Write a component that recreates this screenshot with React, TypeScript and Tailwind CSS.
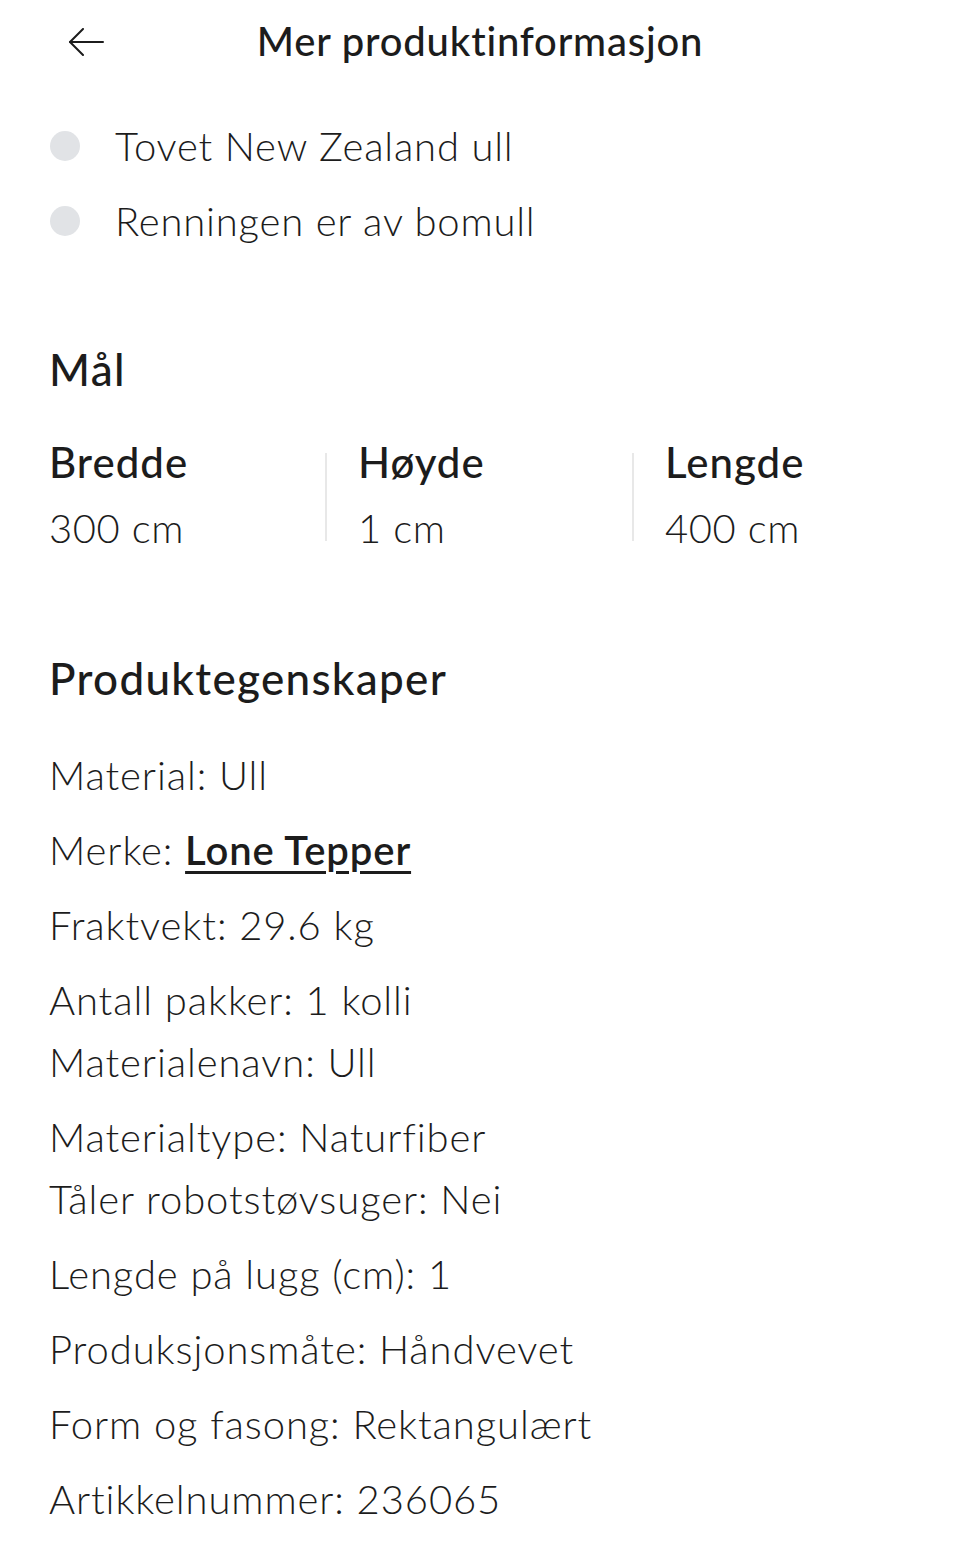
import { Fragment } from "react";

const bullets = ["Tovet New Zealand ull", "Renningen er av bomull"];

const dims = [
  { label: "Bredde", value: "300 cm" },
  { label: "Høyde", value: "1 cm" },
  { label: "Lengde", value: "400 cm" },
];

// each inner array is one block; lines inside a block sit tighter
const props: { k: string; v: string; link?: boolean }[][] = [
  [{ k: "Material", v: "Ull" }],
  [{ k: "Merke", v: "Lone Tepper", link: true }],
  [{ k: "Fraktvekt", v: "29.6 kg" }],
  [
    { k: "Antall pakker", v: "1 kolli" },
    { k: "Materialenavn", v: "Ull" },
  ],
  [
    { k: "Materialtype", v: "Naturfiber" },
    { k: "Tåler robotstøvsuger", v: "Nei" },
  ],
  [{ k: "Lengde på lugg (cm)", v: "1" }],
  [{ k: "Produksjonsmåte", v: "Håndvevet" }],
  [{ k: "Form og fasong", v: "Rektangulært" }],
  [{ k: "Artikkelnummer", v: "236065" }],
];

export default function App() {
  return (
    <div className="w-[960px] min-h-[1564px] bg-white text-[#1c1c1c] font-['Lato',sans-serif]">
      {/* Header */}
      <div className="relative flex items-center justify-center h-[82px]">
        <button className="absolute left-[68px] top-[28px]">
          <svg width="36" height="28" viewBox="0 0 36 28" fill="none" stroke="#1c1c1c" strokeWidth="2" strokeLinecap="round" strokeLinejoin="round">
            <path d="M35 14H2" />
            <path d="M15 1 2 14l13 13" />
          </svg>
        </button>
        <h1 className="text-[40px] font-medium tracking-[0.8px] leading-[48px]">Mer produktinformasjon</h1>
      </div>

      <div className="px-[49px]">
        {/* Bullets */}
        <ul className="mt-[26px]">
          {bullets.map((b) => (
            <li key={b} className="flex items-center h-[75px]">
              <span className="ml-[1px] w-[30px] h-[30px] rounded-full bg-[#e1e3e6] shrink-0" />
              <span className="ml-[35px] text-[40px] font-light tracking-[0.8px]">{b}</span>
            </li>
          ))}
        </ul>

        {/* Mål */}
        <h2 className="mt-[87px] text-[44px] font-medium tracking-[1.3px] leading-[48px]">Mål</h2>
        <div className="mt-[47px] flex">
          {dims.map((d, i) => (
            <Fragment key={d.label}>
              {i > 0 && <div className="w-[2px] h-[88px] mt-[13px] bg-[#e8e8e8] shrink-0" />}
              <div className={i === 0 ? "w-[276px]" : i === 1 ? "w-[305px] pl-[31px]" : "pl-[31px]"}>
                <div className="text-[42px] font-medium tracking-[1px] leading-[44px]">{d.label}</div>
                <div className="mt-[22px] text-[40px] font-light tracking-[0.6px] leading-[44px]">{d.value}</div>
              </div>
            </Fragment>
          ))}
        </div>

        {/* Produktegenskaper */}
        <h2 className="mt-[104px] text-[44px] font-medium tracking-[1.3px] leading-[48px]">Produktegenskaper</h2>
        <div className="mt-[42px] flex flex-col gap-[13px] pb-[20px]">
          {props.map((group, gi) => (
            <div key={gi}>
              {group.map((p) => (
                <p key={p.k} className="text-[40px] font-light tracking-[0.9px] leading-[62px]">
                  {p.k}:{" "}
                  {p.link ? (
                    <a className="font-semibold underline underline-offset-[6px] decoration-[3px]">{p.v}</a>
                  ) : (
                    p.v
                  )}
                </p>
              ))}
            </div>
          ))}
        </div>
      </div>
    </div>
  );
}
